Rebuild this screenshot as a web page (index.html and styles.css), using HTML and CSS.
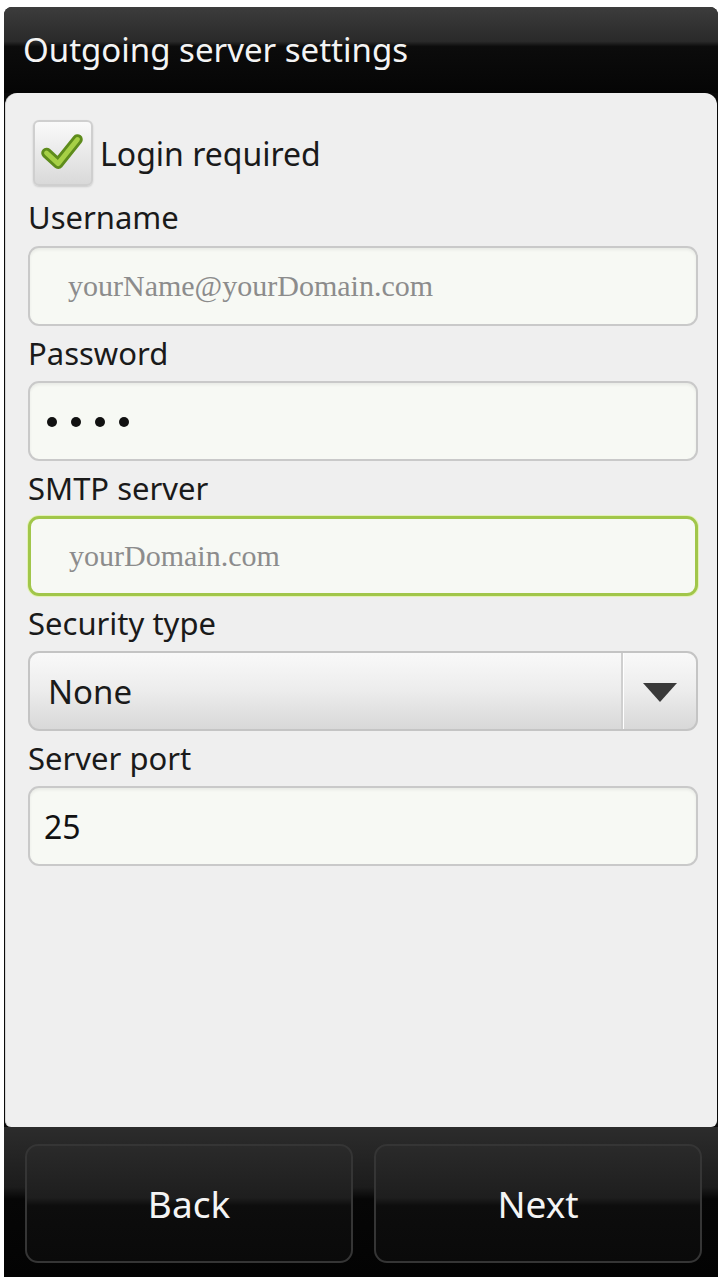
FILE: index.html
```html
<!DOCTYPE html>
<html lang="en">
<head>
  <meta charset="UTF-8">
  <title>Outgoing server settings</title>
  <meta name="viewport" content="width=device-width, initial-scale=1.0">
  <link rel="stylesheet" href="styles.css">
</head>
<body>

<div class="phone">
  <div class="titlebar">Outgoing server settings</div>

  <div class="panel">
    <label class="check-row">
      <span class="checkbox">
        <svg width="60" height="66" viewBox="0 0 60 66">
          <polyline points="14,33 26,44 46,19" fill="none" stroke="#5e8c1c" stroke-width="11" stroke-linecap="round" stroke-linejoin="round"/>
          <polyline points="14,33 26,44 46,19" fill="none" stroke="#a6d046" stroke-width="5" stroke-linecap="round" stroke-linejoin="round"/>
        </svg>
      </span>
      <span class="check-text">Login required</span>
    </label>

    <div class="field-label">Username</div>
    <div class="field"><span class="placeholder">yourName@yourDomain.com</span></div>

    <div class="field-label">Password</div>
    <div class="field">
      <span class="dots"><i class="dot"></i><i class="dot"></i><i class="dot"></i><i class="dot"></i></span>
    </div>

    <div class="field-label">SMTP server</div>
    <div class="field focused"><span class="placeholder">yourDomain.com</span></div>

    <div class="field-label">Security type</div>
    <div class="select">
      <span class="select-value">None</span>
      <span class="select-arrow"><span class="triangle"></span></span>
    </div>

    <div class="field-label">Server port</div>
    <div class="field"><span class="value">25</span></div>
  </div>

  <div class="buttonbar">
    <button class="bar-btn">Back</button>
    <button class="bar-btn">Next</button>
  </div>
</div>

</body>
</html>
```

FILE: styles.css
```css
* { box-sizing: border-box; }
body {
  margin: 0;
  padding: 0;
  background: #fff;
  font-family: 'Noto Sans', 'Open Sans', sans-serif;
}

.phone {
  width: 714px;
  height: 1270px;
  margin: 7px 2px 0 4px;
  background: #0a0a0a;
  border-radius: 8px 8px 0 0;
  display: flex;
  flex-direction: column;
  overflow: hidden;
}

.titlebar {
  height: 86px;
  line-height: 86px;
  padding-left: 19px;
  font-size: 33px;
  color: #f4f4f4;
  background: linear-gradient(to bottom, #3c3c3c 0%, #2a2a2a 40%, #0c0c0c 46%, #050505 100%);
}

.panel {
  flex: 1;
  margin: 0 1px;
  background: #efefef;
  border-left: 1px solid #d6d6d6;
  border-radius: 12px 12px 6px 6px;
  padding: 20px 19px 0 22px;
}

.check-row {
  display: flex;
  align-items: center;
  gap: 7px;
  height: 80px;
  padding-left: 5px;
}

.checkbox {
  width: 60px;
  height: 66px;
  border-radius: 6px;
  border: 2px solid #cfcfcf;
  background: linear-gradient(to bottom, #fafafa, #d9d9d9);
  box-shadow: 0 1px 2px rgba(0,0,0,0.15);
  display: flex;
  align-items: center;
  justify-content: center;
}

.checkbox svg { display: block; margin-left: -2px; }

.check-text {
  font-size: 32px;
  color: #1a1a1a;
}

.field-label {
  font-size: 31px;
  line-height: 42px;
  padding-top: 6px;
  height: 55px;
  color: #1a1a1a;
}

.check-row + .field-label { padding-top: 3px; height: 53px; }

.field {
  height: 80px;
  border: 2px solid #c9c9c9;
  border-radius: 11px;
  background: #f7f9f4;
  box-shadow: inset 0 2px 3px rgba(0,0,0,0.06);
  display: flex;
  align-items: center;
  padding-left: 14px;
}

.field.focused {
  border: 3px solid #a1c64a;
  box-shadow: 0 0 0 1px #e4f2b8;
}

.placeholder {
  font-family: 'Liberation Serif', serif;
  font-size: 30px;
  color: #8c8c8c;
  padding-left: 24px;
}

.dots {
  display: flex;
  gap: 14px;
  padding-left: 3px;
  margin-top: 2px;
}

.dot {
  width: 10px;
  height: 10px;
  border-radius: 50%;
  background: #111;
}

.value {
  font-size: 32px;
  color: #111;
}

.select {
  height: 80px;
  border: 2px solid #c4c4c4;
  border-radius: 11px;
  background: linear-gradient(to bottom, #f9f9f9 0%, #ececec 50%, #d8d8d8 100%);
  display: flex;
  align-items: center;
}

.select-value {
  flex: 1;
  font-size: 33px;
  color: #1a1a1a;
  padding-left: 18px;
}

.select-arrow {
  width: 75px;
  height: 100%;
  border-left: 2px solid #cfcfcf;
  box-shadow: inset 1px 0 0 #fff;
  display: flex;
  align-items: center;
  justify-content: center;
}

.triangle {
  width: 0;
  height: 0;
  border-left: 17px solid transparent;
  border-right: 17px solid transparent;
  border-top: 19px solid #3a3a3a;
  margin-top: 2px;
}

.buttonbar {
  height: 150px;
  display: flex;
  gap: 21px;
  padding: 17px 16px 14px 21px;
  background: linear-gradient(to bottom, #2c2c2c 0%, #1c1c1c 40%, #060606 48%, #030303 100%);
}

.bar-btn {
  flex: 1;
  border: 2px solid #353535;
  border-radius: 13px;
  background: linear-gradient(to bottom, #2a2a2a 0%, #1e1e1e 45%, #0d0d0d 52%, #0a0a0a 100%);
  color: #f4f4f4;
  font-family: 'Noto Sans', 'Open Sans', sans-serif;
  font-size: 37px;
  cursor: pointer;
  padding: 0;
}
```
